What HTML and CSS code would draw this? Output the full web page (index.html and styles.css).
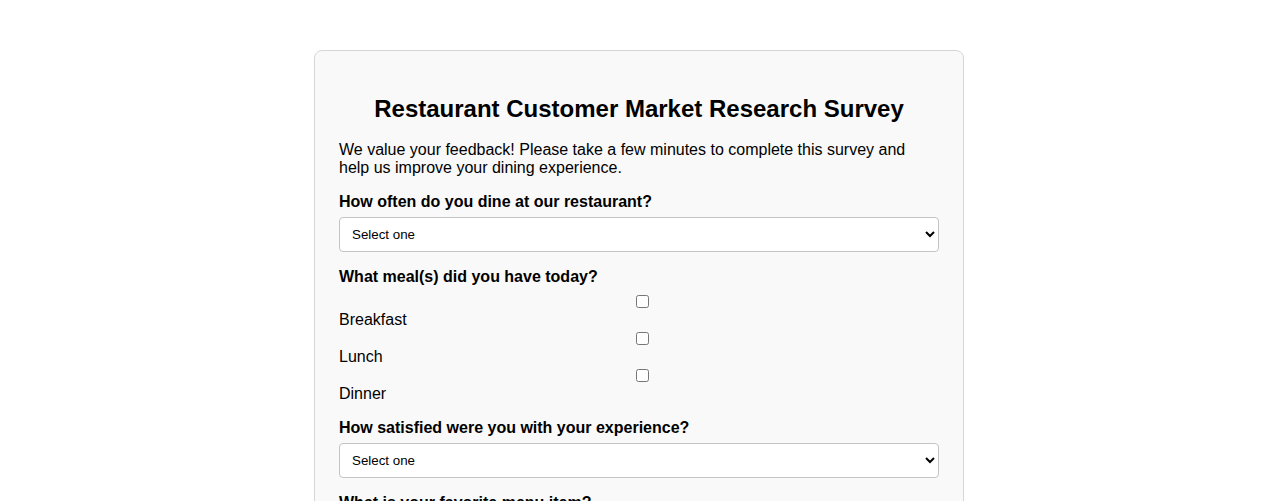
FILE: index.html
```html
<!DOCTYPE html>
<html lang="en">
<head>
<meta charset="utf-8">
<title>Restaurant Customer Market Research Survey</title>
<link rel="stylesheet" href="styles.css">
</head>
<body>
<div class="survey">
  <h1 class="title">Restaurant Customer Market Research Survey</h1>
  <p class="intro">We value your feedback! Please take a few minutes to complete this survey and help us improve your dining experience.</p>
  <form class="form">
    <label class="question" for="frequency">How often do you dine at our restaurant?</label>
    <select class="select" id="frequency">
      <option>Select one</option>
      <option>First time</option>
      <option>Weekly</option>
      <option>Monthly</option>
      <option>Rarely</option>
    </select>

    <label class="question">What meal(s) did you have today?</label>
    <div class="checks">
      <input class="check" type="checkbox" id="breakfast">
      <label class="check-label" for="breakfast">Breakfast</label>
      <input class="check" type="checkbox" id="lunch">
      <label class="check-label" for="lunch">Lunch</label>
      <input class="check" type="checkbox" id="dinner">
      <label class="check-label" for="dinner">Dinner</label>
    </div>

    <label class="question" for="satisfaction">How satisfied were you with your experience?</label>
    <select class="select" id="satisfaction">
      <option>Select one</option>
      <option>Very satisfied</option>
      <option>Satisfied</option>
      <option>Neutral</option>
      <option>Dissatisfied</option>
    </select>

    <label class="question" for="favorite">What is your favorite menu item?</label>
    <input class="text" type="text" id="favorite">

    <label class="question" for="comments">Any additional comments?</label>
    <textarea class="textarea" id="comments"></textarea>

    <button class="submit" type="submit">Submit</button>
  </form>
</div>
</body>
</html>
```
FILE: styles.css
```css
body {
  margin: 0;
  background: #ffffff;
  font-family: "Liberation Sans", Arial, sans-serif;
  color: #000;
}

.survey {
  width: 600px;
  margin: 50px auto;
  padding: 24px;
  background: #f9f9f9;
  border: 1px solid #d6d6d6;
  border-radius: 8px;
}

.title {
  margin: 20px 0 17px;
  font-size: 24px;
  line-height: 28px;
  font-weight: bold;
  text-align: center;
}

.intro {
  margin: 0 0 15px;
  padding-top: 1px;
  font-size: 16px;
  line-height: 18px;
}

.form {
  display: flex;
  flex-direction: column;
  align-items: stretch;
}

.question {
  display: block;
  padding-top: 1px;
  font-weight: bold;
  font-size: 16px;
  line-height: 18px;
  margin-bottom: 6px;
}

.select,
.text,
.textarea {
  box-sizing: border-box;
  width: 600px;
  height: 35px;
  padding: 8px;
  margin: 0 0 15px;
  border: 1px solid #c4c4c4;
  border-radius: 4px;
  background: #fff;
  font-family: "Liberation Sans", Arial, sans-serif;
  font-size: 13.333px;
}

.textarea {
  height: 80px;
}

.checks {
  display: flex;
  flex-direction: column;
  margin-bottom: 15px;
}

.check {
  display: block;
  width: 13px;
  height: 13px;
  margin: 3px 0 2px 297px;
}

.check-label {
  display: block;
  padding-top: 1px;
  font-size: 16px;
  line-height: 18px;
}

.submit {
  align-self: flex-start;
  padding: 10px 20px;
  border: none;
  border-radius: 4px;
  background: #4caf50;
  color: #fff;
  font-size: 16px;
}
```
